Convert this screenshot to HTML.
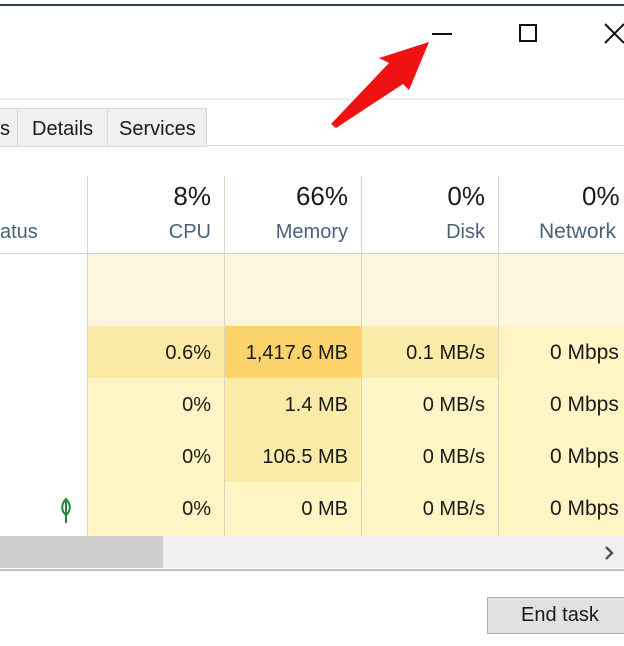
<!DOCTYPE html>
<html><head><meta charset="utf-8"><style>
body{margin:0;width:624px;height:646px;background:#fff;position:relative;overflow:hidden;font-family:"Liberation Sans",sans-serif;color:#1a1a1a}
.a{position:absolute}
.t{font-size:20px;line-height:20px}
.r{text-align:right}
</style></head><body>
<div class="a" style="left:0;top:4px;width:624px;height:2px;background:#2b3f55"></div>
<div class="a" style="left:432px;top:33px;width:20px;height:2px;background:#111"></div>
<div class="a" style="left:519px;top:24px;width:18px;height:18px;border:2px solid #111;box-sizing:border-box"></div>
<svg class="a" style="left:600px;top:22px" width="24" height="22"><path d="M5 2L24 21M24 2L5 21" stroke="#111" stroke-width="2"/></svg>
<div class="a" style="left:0;top:98px;width:624px;height:2px;background:#efefef"></div>
<svg class="a" style="left:0;top:0" width="624" height="160"><polygon points="429,42 379,58 389,63 331,124 336,128 403,84 409,90" fill="#f01212"/></svg>
<div class="a" style="left:0;top:145px;width:624px;height:1px;background:#d9d9d9"></div>
<div class="a" style="left:-2px;top:108px;width:19px;height:37px;background:#f0f0f0;border:1px solid #d9d9d9"></div>
<div class="a" style="left:17px;top:108px;width:89px;height:37px;background:#f0f0f0;border:1px solid #d9d9d9"></div>
<div class="a" style="left:107px;top:108px;width:98px;height:37px;background:#f0f0f0;border:1px solid #d9d9d9"></div>
<div class="a t" style="left:0;top:119px">s</div>
<div class="a t" style="left:32px;top:119px">Details</div>
<div class="a t" style="left:119px;top:119px">Services</div>
<div class="a" style="left:87px;top:254px;width:537px;height:282px;background:#fff4c4"></div>
<div class="a" style="left:87px;top:254px;width:537px;height:72px;background:#fdf6dc"></div>
<div class="a" style="left:87px;top:326px;width:137px;height:52px;background:#fbe9a6"></div>
<div class="a" style="left:224px;top:326px;width:137px;height:52px;background:#fcd36a"></div>
<div class="a" style="left:361px;top:326px;width:137px;height:52px;background:#fbeba9"></div>
<div class="a" style="left:224px;top:378px;width:137px;height:104px;background:#fbeba9"></div>
<div class="a" style="left:0;top:253px;width:624px;height:1px;background:#d4d4d4"></div>
<div class="a" style="left:87px;top:176px;width:1px;height:360px;background:#dcd6c0"></div>
<div class="a" style="left:224px;top:176px;width:1px;height:360px;background:#dcd6c0"></div>
<div class="a" style="left:361px;top:176px;width:1px;height:360px;background:#dcd6c0"></div>
<div class="a" style="left:498px;top:176px;width:1px;height:360px;background:#dcd6c0"></div>
<div class="a t" style="left:0;top:222px;color:#4c607a">atus</div>
<div class="a r" style="left:87px;width:124px;top:181px;font-size:26px">8%</div>
<div class="a r" style="left:224px;width:124px;top:181px;font-size:26px">66%</div>
<div class="a r" style="left:361px;width:124px;top:181px;font-size:26px">0%</div>
<div class="a" style="left:582px;top:181px;font-size:26px">0%</div>
<div class="a t r" style="left:87px;width:124px;top:222px;color:#4c607a">CPU</div>
<div class="a t r" style="left:224px;width:124px;top:222px;color:#4c607a">Memory</div>
<div class="a t r" style="left:361px;width:124px;top:222px;color:#4c607a">Disk</div>
<div class="a t" style="left:539px;top:222px;color:#4c607a;font-size:21px">Network</div>
<div class="a t r" style="left:87px;width:124px;top:343px">0.6%</div>
<div class="a t r" style="left:224px;width:124px;top:343px">1,417.6 MB</div>
<div class="a t r" style="left:361px;width:124px;top:343px">0.1 MB/s</div>
<div class="a t" style="left:550px;top:343px;font-size:21px">0 Mbps</div>
<div class="a t r" style="left:87px;width:124px;top:395px">0%</div>
<div class="a t r" style="left:224px;width:124px;top:395px">1.4 MB</div>
<div class="a t r" style="left:361px;width:124px;top:395px">0 MB/s</div>
<div class="a t" style="left:550px;top:395px;font-size:21px">0 Mbps</div>
<div class="a t r" style="left:87px;width:124px;top:447px">0%</div>
<div class="a t r" style="left:224px;width:124px;top:447px">106.5 MB</div>
<div class="a t r" style="left:361px;width:124px;top:447px">0 MB/s</div>
<div class="a t" style="left:550px;top:447px;font-size:21px">0 Mbps</div>
<div class="a t r" style="left:87px;width:124px;top:499px">0%</div>
<div class="a t r" style="left:224px;width:124px;top:499px">0 MB</div>
<div class="a t r" style="left:361px;width:124px;top:499px">0 MB/s</div>
<div class="a t" style="left:550px;top:499px;font-size:21px">0 Mbps</div>
<svg class="a" style="left:55px;top:496px" width="22" height="30"><path d="M11 3C6 8 6 15 11 19C16 15 16 8 11 3ZM11 5V27" fill="none" stroke="#1d8a3a" stroke-width="2"/></svg>
<div class="a" style="left:0;top:536px;width:624px;height:32px;background:#f0f0f0"></div>
<div class="a" style="left:0;top:536px;width:163px;height:32px;background:#cdcdcd"></div>
<svg class="a" style="left:603px;top:545px" width="12" height="16"><path d="M3 2L9 8L3 14" fill="none" stroke="#555" stroke-width="2.5"/></svg>
<div class="a" style="left:0;top:569px;width:624px;height:2px;background:#bfbfbf"></div>
<div class="a" style="left:487px;top:597px;width:145px;height:37px;background:#e1e1e1;border:1px solid #adadad;box-sizing:border-box"></div>
<div class="a t" style="left:521px;top:605px">End task</div>
</body></html>
